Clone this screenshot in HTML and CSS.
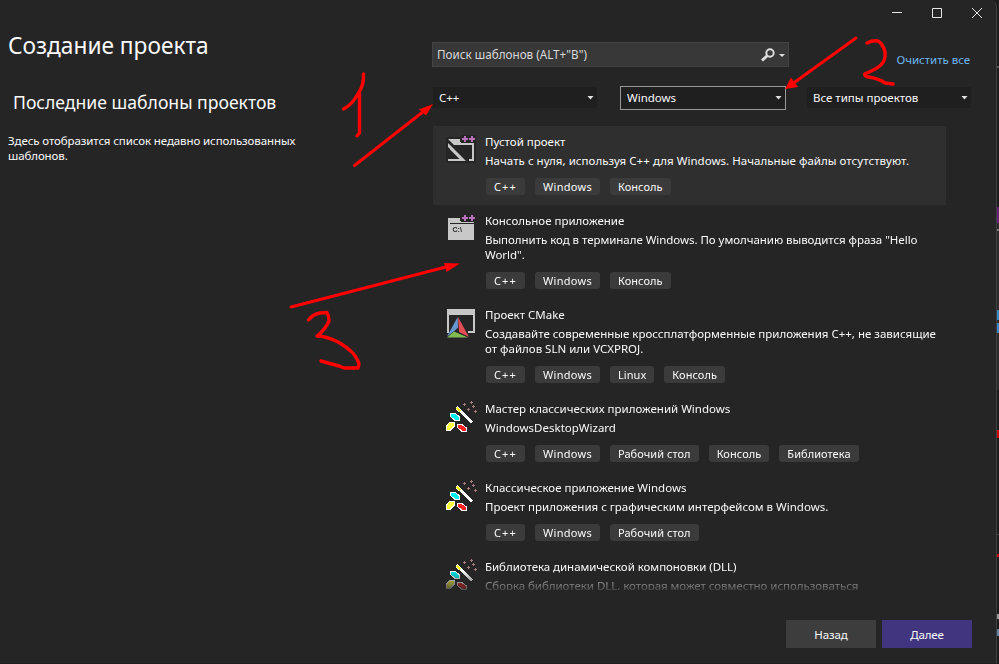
FILE: index.html
```html
<!DOCTYPE html>
<html lang="ru">
<head>
<meta charset="utf-8">
<title>Создание проекта</title>
<link rel="stylesheet" href="styles.css">
</head>
<body>
<svg width="0" height="0" class="defs">
  <defs>
    <g id="plusplus" shape-rendering="crispEdges"><path d="M16 1h15v8H16z" fill="#252526"/><path d="M17 5h6M20 2v6M24 5h6M27 2v6" stroke="#b973ba" stroke-width="2"/></g>
    <g id="wizard" shape-rendering="crispEdges">
      <path d="M11.500 6.500l15.500 15" stroke="#fff" stroke-width="3"/><path d="M12 7l3.500 3.500" stroke="#fff000" stroke-width="2"/>
      <path d="M6 12.500h4.500l3.500 3v3.500H9.500L5.500 15.500z" fill="#0ee" stroke="#fff"/>
      <path d="M4.500 21.500h5v3.500l-4 4h-4.500v-3.500z" fill="#ffff40" stroke="#fff"/>
      <path d="M12.500 23.500h4.500l4 3v3.500h-4.500l-4-3.500z" fill="#f22" stroke="#fff"/>
      <path d="M19.500 2v3M18 3.500h3M26.500 0v3M25 1.500h3M28.500 4v3M27 5.500h3M23.500 7v3M22 8.500h3M30.500 9v3M29 10.500h3" stroke="#a57b7b"/>
    </g>
  </defs>
</svg>
<main class="window">
  <div class="caption">
    <svg width="100" height="20" viewBox="0 0 100 20" fill="none" stroke="#e6e6e6"><path d="M5 9.500h10"/><path d="M45.500 5.500h9v9h-9z"/><path d="M85 5l10 10M95 5L85 15"/></svg>
  </div>
  <div class="content">
    <aside class="recent">
      <h1>Создание проекта</h1>
      <h2>Последние шаблоны проектов</h2>
      <p>Здесь отобразится список недавно использованных<br>шаблонов.</p>
    </aside>
    <section class="templates">
      <div class="search-row">
        <div class="search"><span>Поиск шаблонов (ALT+"B")</span>
          <svg width="26" height="18" viewBox="0 0 26 18"><circle cx="11" cy="7" r="3.700" fill="none" stroke="#ddd" stroke-width="2"/><path d="M8.500 9.500L3 14.500" stroke="#ddd" stroke-width="3"/><path d="M20 8h6l-3 3z" fill="#ddd"/></svg>
        </div>
        <a class="clear">Очистить все</a>
      </div>
      <div class="filters">
        <div class="filter"><span>C++</span><i class="caret"></i></div>
        <div class="filter active"><span>Windows</span><i class="caret"></i></div>
        <div class="filter"><span>Все типы проектов</span><i class="caret"></i></div>
      </div>
      <div class="list">
        <article class="item selected">
          <svg class="icon" viewBox="0 0 32 32"><path d="M1 3h30v26H1z" fill="#252526"/><path d="M3 5h12v3h14v19h-5v-2h3V11H9zM3 9l18 18H3v-2h2V15l-2-2z" fill="#c8c8c8"/><path d="M2.500 6.500L23 27" stroke="#252526" stroke-width="1.500"/><path d="M5 15.500V25h9.500z" fill="#252526"/><use href="#plusplus"/></svg>
          <div class="info"><h3>Пустой проект</h3><p class="wide">Начать с нуля, используя C++ для Windows. Начальные файлы отсутствуют.</p><div class="tags"><span class="cpp">C++</span><span class="win">Windows</span><span>Консоль</span></div></div>
        </article>
        <article class="item">
          <svg class="icon" viewBox="0 0 32 32"><path d="M3 5h12v3h14v19H3z" fill="#c8c8c8"/><path d="M5 10.500h24" stroke="#252526"/><use href="#plusplus"/><text x="7.500" y="19" class="prompt">C:\</text></svg>
          <div class="info"><h3>Консольное приложение</h3><p class="tight">Выполнить код в терминале Windows. По умолчанию выводится фраза "Hello<br>World".</p><div class="tags"><span class="cpp">C++</span><span class="win">Windows</span><span>Консоль</span></div></div>
        </article>
        <article class="item">
          <svg class="icon" viewBox="0 0 32 32"><path d="M2 2h28v24h-7v-2h5V8H4v18H2z" fill="#c8c8c8"/><path d="M13 9L1.500 31H24.500z" fill="#252526"/><path d="M12.700 10L2 29.500l8-6 3-3z" fill="#6797d2"/><path d="M13 10l11 20-10-5z" fill="#e34d55"/><path d="M2 30.500h21l-14-6z" fill="#80bc50"/></svg>
          <div class="info"><h3>Проект CMake</h3><p>Создавайте современные кроссплатформенные приложения C++, не зависящие<br>от файлов SLN или VCXPROJ.</p><div class="tags"><span class="cpp">C++</span><span class="win">Windows</span><span>Linux</span><span>Консоль</span></div></div>
        </article>
        <article class="item">
          <svg class="icon" viewBox="0 0 32 32"><use href="#wizard"/></svg>
          <div class="info"><h3>Мастер классических приложений Windows</h3><p>WindowsDesktopWizard</p><div class="tags"><span class="cpp">C++</span><span class="win">Windows</span><span>Рабочий стол</span><span>Консоль</span><span>Библиотека</span></div></div>
        </article>
        <article class="item">
          <svg class="icon" viewBox="0 0 32 32"><use href="#wizard"/></svg>
          <div class="info"><h3>Классическое приложение Windows</h3><p>Проект приложения с графическим интерфейсом в Windows.</p><div class="tags"><span class="cpp">C++</span><span class="win">Windows</span><span>Рабочий стол</span></div></div>
        </article>
        <article class="item">
          <svg class="icon" viewBox="0 0 32 32"><use href="#wizard"/></svg>
          <div class="info"><h3 class="tight">Библиотека динамической компоновки (DLL)</h3><p class="tight">Сборка библиотеки DLL, которая может совместно использоваться</p></div>
        </article>
      </div>
    </section>
  </div>
  <footer><button>Назад</button><button class="primary">Далее</button></footer>
</main>
<svg class="marks" width="999" height="664" viewBox="0 0 999 664">
  <g class="pen">
    <path class="shaft" d="M354.500 165.500L424 111M856 38L795 82M291 307L446 267"/>
    <path d="M363.500 74Q364 85 358.500 93Q352 105 343.500 109M359.500 93V133L357 136"/>
    <path d="M867 43Q873 40 878 41Q883 44 885 52Q886 60 881 65Q875 70 864.500 74Q865 77 869 77Q880 79 885 83L893 84"/>
    <path d="M308.500 320Q313 314 320 313L327 312.500Q329 316 329 321Q325 330 317 336Q326 336 338 342Q356 352 359 364L358 368H344L339 366L328 363L321 361"/>
  </g>
  <path class="head" d="M433 104L419 109.500L426 115.500zM785 89L791 77.500L798 87zM460 263.500L444 263L446.500 272z"/>
</svg>
</body>
</html>
```
FILE: styles.css
```css
* { box-sizing: border-box; }
body {
  margin: 0; width: 999px; height: 664px; overflow: hidden; color: #fafafa;
  font: 11.5px/15px "Noto Sans", sans-serif;
  background: linear-gradient(#1c1c1d 66px, #555 66px, #555 68px, #1c1c1d 68px, #1c1c1d 207px, #68217a 207px, #68217a 223px, #2b2b2c 223px, #2b2b2c 229px, #777 229px, #777 231px, #2b2b2c 231px, #2b2b2c 310px, #3289c7 310px, #3289c7 320px, #2b2b2c 320px, #2b2b2c 323px, #3289c7 323px, #3289c7 333px, #2b2b2c 333px, #2b2b2c 390px, #1c1c1d 390px, #1c1c1d 430px, #d00000 430px, #d00000 438px, #1c1c1d 438px, #1c1c1d 534px, #444 534px, #444 535px, #1c1c1d 535px, #1c1c1d 554px, #d00000 554px, #d00000 557px, #1c1c1d 557px, #1c1c1d 614px, #999 614px, #999 619px, #1c1c1d 619px, #1c1c1d 629px, #5c84a8 629px, #5c84a8 636px, #1c1c1d 636px);
}
h1, h2, h3, p { margin: 0; font-weight: 400; font-size: inherit; }
.defs { position: absolute; }
.window { width: 997px; height: 664px; background: #252526; border-right: 1px solid #414143; border-bottom: 1px solid #1f1f20; border-top-right-radius: 7px; display: flex; flex-direction: column; }
.caption { height: 42px; padding: 3px 9px 0 0; display: flex; justify-content: flex-end; }
.content { display: flex; height: 548px; }
.recent { width: 432px; padding-left: 8px; }
.recent h1 { font-size: 22.7px; line-height: 30px; margin-top: -11px; }
.recent h2 { font-size: 17.6px; line-height: 24px; margin: 29px 0 0 5px; }
.recent p { margin-top: 19px; letter-spacing: -.1px; }
.templates { width: 540px; }
.search-row { display: flex; justify-content: space-between; }
.search { width: 357px; height: 25px; background: #383838; border: 1px solid #434346; display: flex; align-items: center; justify-content: space-between; padding: 0 3px 0 4px; color: #d8d8d8; font-size: 11.7px; }
.clear { color: #6cb8ef; margin: 10px 2px 0 0; letter-spacing: -.03px; }
.filters { display: grid; grid-template-columns: 187px 187px 164px; align-items: center; margin: 18px 1px 0; height: 25px; }
.filter { display: flex; justify-content: space-between; align-items: center; width: 164px; height: 21px; padding: 0 3px 0 6px; background: #1f1f20; }
.filter.active { width: 166px; height: 24px; border: 1px solid #999; }
.caret { width: 7px; height: 4px; background: #e0e0e0; clip-path: polygon(0 0, 100% 0, 50% 100%); }
.list { height: 464px; margin: 16px 0 0 1px; overflow: hidden; mask-image: linear-gradient(#000 444px, rgba(0,0,0,.2) 464px); }
.item { width: 513px; display: flex; padding: 8px 0 10px 12px; }
.selected { background: #2f2f30; }
.icon { flex: none; width: 32px; height: 32px; margin-right: 8px; overflow: visible; }
.prompt { font: bold 7px "Liberation Sans", sans-serif; fill: #252526; }
.info { white-space: nowrap; }
.item h3 { line-height: 16px; }
.item p { margin-top: 3px; }
.item .wide { letter-spacing: .04px; }
.item .tight { letter-spacing: -.04px; }
.tags { display: flex; gap: 10px; margin: 10px 0 0 1px; }
.tags span { height: 17px; line-height: 17px; padding: 0 8px; background: #3b3b3c; border-radius: 3px; font-size: 11px; letter-spacing: .06px; }
.tags .cpp { width: 39px; letter-spacing: 1.1px; }
.tags .win { width: 65px; letter-spacing: .28px; }
footer { display: flex; justify-content: flex-end; gap: 6px; padding: 30px 24px 0 0; }
button { width: 90px; height: 28px; padding: 0; border: 0; background: #3d3d3e; color: #fafafa; font: 11.5px "Noto Sans", sans-serif; letter-spacing: -.1px; }
.primary { background: #413580; }
.marks { position: absolute; left: 0; top: 0; }
.pen { fill: none; stroke: #f00; stroke-width: 3.4; stroke-linecap: round; stroke-linejoin: round; }
.shaft { stroke-width: 3; }
.head { fill: #f00; }
```
